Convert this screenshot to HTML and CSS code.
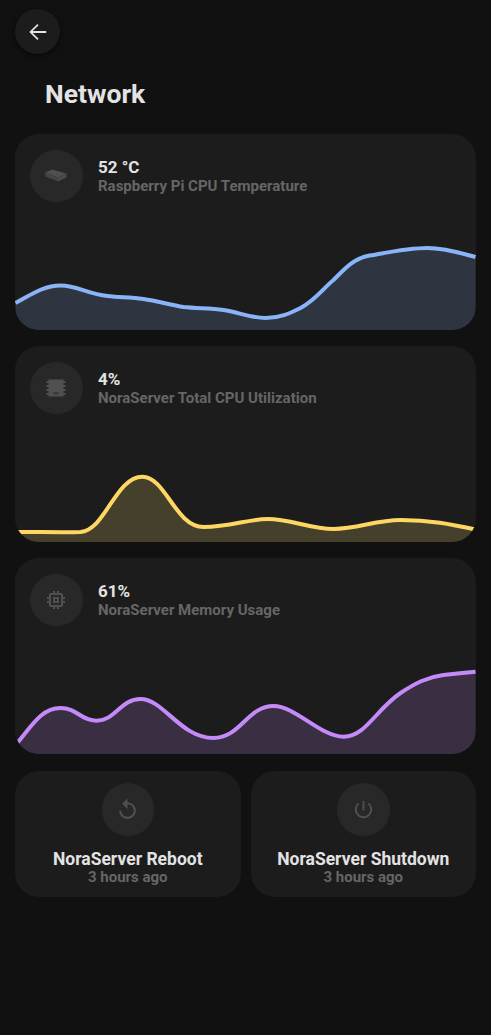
FILE: index.html
```html
<!DOCTYPE html>
<html lang="en">
    <head>
        <meta charset="UTF-8" />
        <meta name="viewport" content="width=device-width, initial-scale=1.0" />
        <title>Network</title>
        <link rel="stylesheet" href="styles.css">
    </head>
    <body>
        <div class="page">
            <button class="back" type="button" aria-label="Back">
                <svg width="22" height="22" viewBox="0 0 20 20" fill="none" stroke="#e3e3e3" stroke-width="1.6">
                    <path d="M17.500 10H3.500M10 3.200L3.200 10l6.800 6.800" />
                </svg>
            </button>

            <h1 class="title">Network</h1>

            <div class="list">
                <!-- temperature -->
                <div class="card">
                    <div class="head">
                        <div class="circle">
                            <svg width="24" height="24" viewBox="0 0 24 24">
                                <path fill="#505050" d="M1.200 8.500L8.500 5.500l14 4-8.500 4z" />
                                <path fill="#444" d="M1.200 8.500l12.800 5v4l-12.500-5z" />
                                <path fill="#4a4a4a" d="M14 13.500l8.500-4v4l-8.500 4z" />
                            </svg>
                        </div>
                        <div class="text">
                            <div class="value">52 °C</div>
                            <div class="label">Raspberry Pi CPU Temperature</div>
                        </div>
                    </div>
                    <svg class="chart" viewBox="0 0 460 120">
                        <path class="area blue" d="M0 93C15 85 28 75.500 45 75.500C62 75.500 72 84 92 86C105 87.500 115 87 128 89C142 91 155 95 168 97C182 98.500 195 98 208 100C222 102 235 108 250 108C265 108 275 103 285 98C300 90 308 78 318 70C330 58 338 49 352 46C372 42.500 392 38 412 38C430 38 445 43 460 47V120H0z" />
                        <path class="line blue" d="M0 93C15 85 28 75.500 45 75.500C62 75.500 72 84 92 86C105 87.500 115 87 128 89C142 91 155 95 168 97C182 98.500 195 98 208 100C222 102 235 108 250 108C265 108 275 103 285 98C300 90 308 78 318 70C330 58 338 49 352 46C372 42.500 392 38 412 38C430 38 445 43 460 47" />
                    </svg>
                </div>

                <!-- cpu -->
                <div class="card">
                    <div class="head">
                        <div class="circle">
                            <svg width="24" height="24" viewBox="0 0 24 24" fill="#505050">
                                <path d="M4.500 3.500h15v17h-15zM2.500 5H4.500v2H2.500zM2.500 9H4.500v2H2.500zM2.500 13H4.500v2H2.500zM2.500 17H4.500v2H2.500zM19.500 5h2v2h-2zM19.500 9h2v2h-2zM19.500 13h2v2h-2zM19.500 17h2v2h-2z" />
                                <path fill="#3a3a3a" d="M9.500 16h5v2.500h-5z" />
                            </svg>
                        </div>
                        <div class="text">
                            <div class="value">4%</div>
                            <div class="label">NoraServer Total CPU Utilization</div>
                        </div>
                    </div>
                    <svg class="chart" viewBox="0 0 460 120">
                        <path class="area yellow" d="M0 110C25 110 50 110.500 65 110C90 108 100 54.700 127 54.700C150 54.700 160 105 188 105C215 105 232 97 252 97C275 97 295 107 318 107C342 107 360 98 385 98C415 98 435 102 460 107.500V120H0z" />
                        <path class="line yellow" d="M0 110C25 110 50 110.500 65 110C90 108 100 54.700 127 54.700C150 54.700 160 105 188 105C215 105 232 97 252 97C275 97 295 107 318 107C342 107 360 98 385 98C415 98 435 102 460 107.500" />
                    </svg>
                </div>

                <!-- memory -->
                <div class="card">
                    <div class="head">
                        <div class="circle">
                            <svg width="24" height="24" viewBox="0 0 24 24" fill="#505050">
                                <path d="M15 9H9v6h6V9zm-2 4h-2v-2h2v2zm8-2V9h-2V7c0-1.100-.9-2-2-2h-2V3h-2v2h-2V3H9v2H7c-1.100 0-2 .9-2 2v2H3v2h2v2H3v2h2v2c0 1.100.9 2 2 2h2v2h2v-2h2v2h2v-2h2c1.100 0 2-.9 2-2v-2h2v-2h-2v-2h2zm-4 6H7V7h10v10z" />
                            </svg>
                        </div>
                        <div class="text">
                            <div class="value">61%</div>
                            <div class="label">NoraServer Memory Usage</div>
                        </div>
                    </div>
                    <svg class="chart" viewBox="0 0 460 120">
                        <path class="area purple" d="M0 111C15 94 25 74 45 74C62 74 65 86.700 81 86.700C100 86.700 105 65 125 65C148 65 165 104 198 104C225 104 232 72 258 72C280 72 305 102.700 328 102.700C350 102.700 360 76 385 59C400 49 412 43 428 41C440 39.500 450 38.500 460 37.700V120H0z" />
                        <path class="line purple" d="M0 111C15 94 25 74 45 74C62 74 65 86.700 81 86.700C100 86.700 105 65 125 65C148 65 165 104 198 104C225 104 232 72 258 72C280 72 305 102.700 328 102.700C350 102.700 360 76 385 59C400 49 412 43 428 41C440 39.500 450 38.500 460 37.700" />
                    </svg>
                </div>

                <div class="actions">
                    <div class="action">
                        <div class="circle">
                            <svg width="25" height="25" viewBox="0 0 24 24" fill="#505050">
                                <path d="M12 5V1.500L7 6.500l5 5V7c3.300 0 6 2.700 6 6s-2.700 6-6 6-6-2.700-6-6H4c0 4.400 3.600 8 8 8s8-3.600 8-8-3.600-8-8-8z" />
                            </svg>
                        </div>
                        <div class="name">NoraServer Reboot</div>
                        <div class="time">3 hours ago</div>
                    </div>
                    <div class="action">
                        <div class="circle">
                            <svg width="23" height="23" viewBox="0 0 24 24" fill="#505050">
                                <path d="M13 3h-2v10h2V3zm4.830 2.170l-1.420 1.420C17.990 7.860 19 9.810 19 12c0 3.870-3.130 7-7 7s-7-3.130-7-7c0-2.190 1.010-4.140 2.580-5.420L6.170 5.170C4.230 6.820 3 9.260 3 12c0 4.970 4.030 9 9 9s9-4.030 9-9c0-2.740-1.230-5.180-3.170-6.830z" />
                            </svg>
                        </div>
                        <div class="name">NoraServer Shutdown</div>
                        <div class="time">3 hours ago</div>
                    </div>
                </div>
            </div>
        </div>
    </body>
</html>
```

FILE: styles.css
```css
* {
    margin: 0;
    padding: 0;
    box-sizing: border-box;
}

body {
    background-color: #111;
    font-family: Roboto, sans-serif;
    color: #e3e3e3;
}

.page {
    padding: 9px 15px 0 15px;
    min-height: 1035px;
}

.back {
    width: 45px;
    height: 45px;
    border: none;
    border-radius: 50%;
    background-color: #1c1c1c;
    box-shadow: 0 2px 6px rgba(0, 0, 0, 0.5);
    display: flex;
    align-items: center;
    justify-content: center;
}

.title {
    font-size: 26.500px;
    font-weight: 700;
    line-height: 30px;
    margin: 25px 0 25px 30px;
}

.list {
    display: flex;
    flex-direction: column;
    gap: 16px;
}

.card {
    height: 196px;
    background-color: #1c1c1c;
    border-radius: 24px;
    overflow: hidden;
    display: flex;
    flex-direction: column;
    justify-content: space-between;
}

.head {
    display: flex;
    align-items: center;
    gap: 15.500px;
    padding: 15.500px 15px 0 15px;
}

.circle {
    width: 52.500px;
    height: 52.500px;
    border-radius: 50%;
    background-color: #282828;
    display: flex;
    align-items: center;
    justify-content: center;
    flex-shrink: 0;
}

.value {
    font-size: 17px;
    font-weight: 700;
    line-height: 20px;
}

.label {
    font-size: 15px;
    font-weight: 700;
    line-height: 18px;
    color: #666;
}

.chart {
    display: block;
    width: 100%;
    height: 120px;
}

.area {
    stroke: none;
}

.line {
    fill: none;
    stroke-width: 4;
}

.area.blue { fill: #2e3540; }
.line.blue { stroke: #8ab4f8; }
.area.yellow { fill: #45402b; }
.line.yellow { stroke: #fdd663; }
.area.purple { fill: #3a2f42; }
.line.purple { stroke: #c58af9; }

.actions {
    display: flex;
    gap: 10px;
    margin-top: 1px;
}

.action {
    flex: 1;
    height: 126px;
    padding-top: 12px;
    background-color: #1c1c1c;
    border-radius: 24px;
    display: flex;
    flex-direction: column;
    align-items: center;
}

.name {
    font-size: 17.500px;
    font-weight: 700;
    line-height: 20px;
    margin-top: 13.500px;
}

.time {
    font-size: 15px;
    font-weight: 700;
    line-height: 17px;
    color: #666;
}
```
